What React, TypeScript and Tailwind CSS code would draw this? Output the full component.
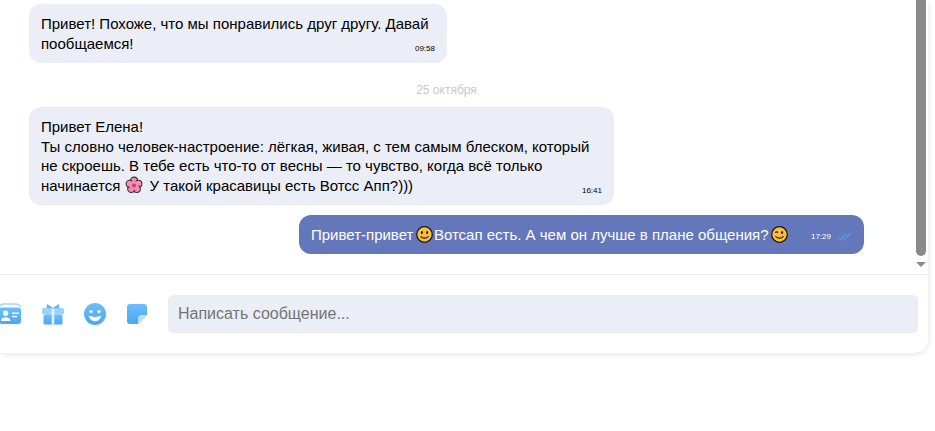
const font = { fontFamily: '"Liberation Sans", Arial, sans-serif' };

function SmileEmoji({ wink }: { wink?: boolean }) {
  return (
    <svg width="17" height="17" viewBox="0 0 17 17" className="ml-[2.5px] mr-[1px] inline-block shrink-0">
      <circle cx="8.5" cy="8.5" r="7.8" fill="#fbbf3a" stroke="#1c1a14" strokeWidth="1.3" />
      {wink ? (
        <path d="M4.2 6.6 Q5.8 5.2 7 6.6" fill="none" stroke="#1c1a14" strokeWidth="1.2" />
      ) : (
        <ellipse cx="5.9" cy="6.4" rx="1" ry="1.5" fill="#1c1a14" />
      )}
      <ellipse cx="11.1" cy="6.4" rx="1" ry="1.5" fill="#1c1a14" />
      <path d="M4.4 10.4 Q8.5 13.8 12.6 10.4" fill="none" stroke="#1c1a14" strokeWidth="1.2" />
    </svg>
  );
}

function Blossom() {
  return (
    <svg width="18" height="18" viewBox="0 0 18 18" className="ml-[1px] mr-[2px] inline-block align-[-3px]">
      <g stroke="#3d3238" strokeWidth="1.1" fill="#f590b4">
        <circle cx="9" cy="4.6" r="3.5" />
        <circle cx="13.4" cy="7.8" r="3.5" />
        <circle cx="11.8" cy="13" r="3.5" />
        <circle cx="6.2" cy="13" r="3.5" />
        <circle cx="4.6" cy="7.8" r="3.5" />
      </g>
      <circle cx="9" cy="9.4" r="4.4" fill="#f590b4" />
      <circle cx="9" cy="9.4" r="2" fill="#e8316f" />
    </svg>
  );
}

function IconGradient({ id }: { id: string }) {
  return (
    <defs>
      <linearGradient id={id} x1="0" y1="0" x2="0" y2="1">
        <stop offset="0" stopColor="#6cbefb" />
        <stop offset="1" stopColor="#4aa8ef" />
      </linearGradient>
    </defs>
  );
}

function ContactIcon() {
  return (
    <svg width="24" height="22" viewBox="0 0 24 22" className="shrink-0">
      <IconGradient id="contact" />
      <path d="M1.5 4 Q2.5 1 6 1 H18 Q21.5 1 22.5 4" fill="none" stroke="#a3d6fc" strokeWidth="1.6" />
      <rect x="1" y="4.5" width="22" height="16.5" rx="3" fill="url(#contact)" />
      <circle cx="7.6" cy="10.2" r="2.7" fill="#fff" />
      <path d="M2.8 18 Q3 14.2 7.6 14.2 Q12.2 14.2 12.4 18 Z" fill="#fff" />
      <rect x="14" y="9.5" width="7" height="1.5" fill="#fff" />
      <rect x="14" y="12.8" width="5" height="1.5" fill="#fff" />
    </svg>
  );
}

function GiftIcon() {
  return (
    <svg width="22" height="22" viewBox="0 0 22 22" className="shrink-0">
      <IconGradient id="gift" />
      <path d="M5 1 L10.5 4.5 V6 H4.5 Z M17 1 L11.5 4.5 V6 H17.5 Z" fill="#5db5f6" />
      <rect x="0" y="5" width="22" height="6.5" rx="1.5" fill="#9ad2fc" />
      <rect x="1.5" y="11.5" width="19" height="10" rx="1.5" fill="url(#gift)" />
      <rect x="9.7" y="6" width="2.6" height="15.5" fill="#e4f3fe" />
    </svg>
  );
}

function FaceIcon() {
  return (
    <svg width="22" height="22" viewBox="0 0 22 22" className="shrink-0">
      <IconGradient id="face" />
      <circle cx="11" cy="11" r="11" fill="url(#face)" />
      <circle cx="7" cy="8.6" r="1.6" fill="#fff" />
      <circle cx="15" cy="8.6" r="1.6" fill="#fff" />
      <path d="M4.6 12.8 Q11 15 17.4 12.8 Q16 18.2 11 18.2 Q6 18.2 4.6 12.8 Z" fill="#fff" />
    </svg>
  );
}

function NoteIcon() {
  return (
    <svg width="20" height="20" viewBox="0 0 20 20" className="ml-[1px] shrink-0">
      <IconGradient id="note" />
      <path d="M3 0 H17 Q20 0 20 3 V11 L11 20 H3 Q0 20 0 17 V3 Q0 0 3 0 Z" fill="url(#note)" />
      <path d="M20 11 L11 20 V14.5 Q11 11 14.5 11 Z" fill="#b5dffc" />
    </svg>
  );
}

function DoubleCheck() {
  return (
    <svg width="14" height="9" viewBox="0 0 14 9" className="mt-[4px] shrink-0">
      <path d="M0.5 5.5 L2.6 8 L8.5 1 M5 7.6 L5.5 8 L13 1" fill="none" stroke="#4a9fe8" strokeWidth="1.2" />
    </svg>
  );
}

function Time({ children }: { children: string }) {
  return <span className="-mb-[1px] shrink-0 text-[8px] leading-[10px]">{children}</span>;
}

export default function App() {
  return (
    <div className="h-[431px] w-[935px] overflow-hidden bg-white text-black" style={font}>
      <div className="flex h-[353px] w-[928px] flex-col rounded-br-[14px] bg-white shadow-[0_1px_6px_rgba(0,0,0,0.12)]">
        <div className="flex h-[275px] shrink-0 border-b border-[#e8e8e8]">
          <div className="flex min-w-0 flex-1 flex-col items-start pl-[29px] pr-[52px] pt-1 text-[15px] leading-[19.5px]">
            <div className="w-[418px] rounded-[12px] bg-[#ebeef6] px-3 pb-[10px] pt-[10px]">
              <p>Привет! Похоже, что мы понравились друг другу. Давай</p>
              <div className="flex items-end justify-between">
                <span>пообщаемся!</span>
                <Time>09:58</Time>
              </div>
            </div>
            <p className="mt-[19px] w-full text-center text-[12px] leading-[16px] text-[#c9c9c9]">25 октября</p>
            <div className="mt-[9px] w-[585px] rounded-[12px] bg-[#ebeef6] px-3 pb-[10px] pt-[10px]">
              <p>
                Привет Елена!
                <br />
                Ты словно человек-настроение: лёгкая, живая, с тем самым блеском, который не скроешь. В тебе есть что-то от весны — то чувство, когда всё только
              </p>
              <div className="flex items-end justify-between">
                <span>начинается <Blossom /> У такой красавицы есть Вотсс Апп?)))</span>
                <Time>16:41</Time>
              </div>
            </div>
            <div className="mt-[10px] flex h-[39px] w-[565px] items-center self-end rounded-[12px] bg-[#6477bb] pl-3 pr-[12px] text-white">
              <span className="flex items-center whitespace-nowrap">
                Привет-привет
                <SmileEmoji />
                Вотсап есть. А чем он лучше в плане общения?
                <SmileEmoji wink />
              </span>
              <span className="ml-auto flex items-center gap-[7px]">
                <span className="mt-[4px] text-[8px] leading-[10px]">17:29</span>
                <DoubleCheck />
              </span>
            </div>
          </div>
          <div className="flex h-full w-[12px] shrink-0 flex-col items-start">
            <div className="h-[256px] w-[10px] rounded-b-[5px] bg-[#8a8a8a]" />
            <div className="mt-[6px] h-0 w-0 self-start border-x-[5px] border-t-[5px] border-x-transparent border-t-[#8a8a8a]" />
          </div>
        </div>
        <div className="flex flex-1 items-start pr-[10px] pt-5">
          <div className="-ml-[2px] flex h-[38px] w-[170px] shrink-0 items-center gap-[20px]">
            <ContactIcon />
            <GiftIcon />
            <FaceIcon />
            <NoteIcon />
          </div>
          <div className="flex h-[38px] flex-1 items-center rounded-[5px] bg-[#ebeef6] px-[10px] text-[16px] text-[#757575]">
            Написать сообщение...
          </div>
        </div>
      </div>
    </div>
  );
}
